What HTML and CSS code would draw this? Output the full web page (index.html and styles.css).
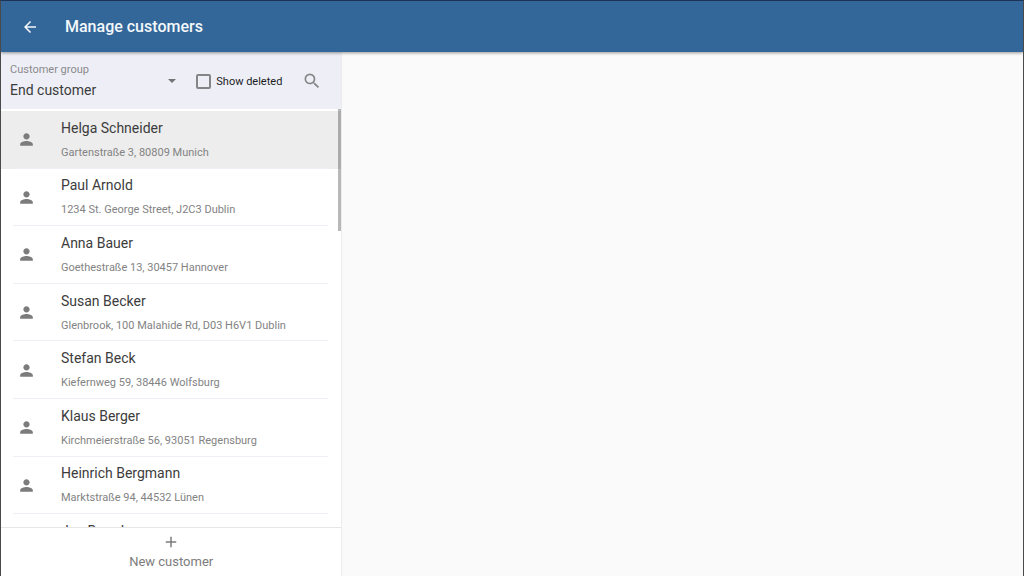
FILE: index.html
```html
<!DOCTYPE html>
<html lang="en">
<head>
    <meta charset="UTF-8">
    <meta name="viewport" content="width=device-width, initial-scale=1.0">
    <title>Manage customers</title>
    <link rel="stylesheet" href="styles.css">
</head>
<body>
    <!-- Person icon shared by all rows -->
    <svg class="icon-defs" aria-hidden="true">
        <symbol id="person" viewBox="0 0 24 24">
            <path d="M12 12c2.200 0 4-1.800 4-4s-1.800-4-4-4-4 1.800-4 4 1.800 4 4 4zm0 2c-2.700 0-8 1.300-8 4v2h16v-2c0-2.700-5.300-4-8-4z"/>
        </symbol>
    </svg>

    <header class="app-bar">
        <button type="button" class="back" aria-label="Back">
            <svg viewBox="0 0 24 24"><path d="M20 11H7.830l5.590-5.590L12 4l-8 8 8 8 1.410-1.410L7.830 13H20v-2z"/></svg>
        </button>
        <h1>Manage customers</h1>
    </header>

    <div class="content">
        <section class="sidebar">
            <form class="filter">
                <div class="group">
                    <label for="group">Customer group</label>
                    <select id="group">
                        <option>End customer</option>
                    </select>
                </div>
                <label class="deleted" for="deleted">
                    <input type="checkbox" id="deleted">
                    Show deleted
                </label>
                <button type="button" class="search" aria-label="Search">
                    <svg viewBox="0 0 24 24"><path d="M15.500 14h-.79l-.28-.27A6.470 6.470 0 0 0 16 9.500 6.500 6.500 0 1 0 9.500 16c1.610 0 3.090-.59 4.230-1.570l.27.28v.79l5 4.990L20.490 19l-4.990-5zm-6 0C7.010 14 5 11.990 5 9.500S7.010 5 9.500 5 14 7.010 14 9.500 11.990 14 9.500 14z"/></svg>
                </button>
            </form>

            <div class="list-area">
                <ul class="customers">
                    <li class="customer selected">
                        <svg><use href="#person"/></svg>
                        <div><h2>Helga Schneider</h2><p>Gartenstraße 3, 80809 Munich</p></div>
                    </li>
                    <li class="customer">
                        <svg><use href="#person"/></svg>
                        <div><h2>Paul Arnold</h2><p>1234 St. George Street, J2C3 Dublin</p></div>
                    </li>
                    <li class="customer">
                        <svg><use href="#person"/></svg>
                        <div><h2>Anna Bauer</h2><p>Goethestraße 13, 30457 Hannover</p></div>
                    </li>
                    <li class="customer">
                        <svg><use href="#person"/></svg>
                        <div><h2>Susan Becker</h2><p>Glenbrook, 100 Malahide Rd, D03 H6V1 Dublin</p></div>
                    </li>
                    <li class="customer">
                        <svg><use href="#person"/></svg>
                        <div><h2>Stefan Beck</h2><p>Kiefernweg 59, 38446 Wolfsburg</p></div>
                    </li>
                    <li class="customer">
                        <svg><use href="#person"/></svg>
                        <div><h2>Klaus Berger</h2><p>Kirchmeierstraße 56, 93051 Regensburg</p></div>
                    </li>
                    <li class="customer">
                        <svg><use href="#person"/></svg>
                        <div><h2>Heinrich Bergmann</h2><p>Marktstraße 94, 44532 Lünen</p></div>
                    </li>
                    <li class="customer">
                        <svg><use href="#person"/></svg>
                        <div><h2>Jan Bernd</h2><p>&nbsp;</p></div>
                    </li>
                </ul>
                <div class="scroll-thumb"></div>
            </div>

            <button type="button" class="new-customer">
                <svg viewBox="0 0 24 24"><path d="M19 13h-6v6h-2v-6H5v-2h6V5h2v6h6v2z"/></svg>
                New customer
            </button>
        </section>
        <main class="detail"></main>
    </div>
</body>
</html>
```

FILE: styles.css
```css
* {
    box-sizing: border-box;
}

body {
    font-family: Roboto, "Liberation Sans", sans-serif;
    margin: 0;
    height: 100vh;
    display: flex;
    flex-direction: column;
    overflow: hidden;
    background-color: #fafafa;
    color: #3c3c3c;
    border: 1px solid #4a4a4c;
    border-top-color: #1d3257;
    border-bottom: none;
}

h1, h2, p, ul {
    margin: 0;
    padding: 0;
    font-weight: normal;
}

button {
    border: none;
    padding: 0;
    background: none;
    font-family: inherit;
    cursor: pointer;
}

svg {
    display: block;
    fill: currentColor;
}

.icon-defs {
    display: none;
}

/* Top bar */
.app-bar {
    display: flex;
    align-items: center;
    gap: 26px;
    flex: none;
    height: 51px;
    padding-left: 20px;
    background-color: #336799;
    color: #f4f8fb;
    box-shadow: 0 1px 3px rgba(0, 0, 0, 0.4);
    z-index: 1;
}

.back svg {
    width: 18px;
    height: 18px;
    color: #f4f8fb;
}

.app-bar h1 {
    font-size: 16px;
    font-weight: 500;
}

.content {
    display: flex;
    flex: 1;
    min-height: 0;
}

.sidebar {
    display: flex;
    flex-direction: column;
    width: 33.4%;
    background-color: white;
    border-right: 1px solid #ececec;
}

.detail {
    flex: 1;
}

/* Filter row above the list */
.filter {
    display: flex;
    align-items: center;
    flex: none;
    height: 57px;
    padding: 1px 19px 0 9px;
    background-color: #eeeff6;
}

.group {
    position: relative;
    flex: 1;
    margin-right: 20px;
}

.group label {
    display: block;
    font-size: 11px;
    line-height: 18px;
    color: #8a8a8d;
}

.group select {
    display: block;
    width: 100%;
    height: 22px;
    padding: 0;
    border: none;
    appearance: none;
    background: none;
    font-family: inherit;
    font-size: 14px;
    color: #3c3c3c;
}

/* Drop-down arrow over the select */
.group::after {
    content: "";
    position: absolute;
    right: 0;
    top: 18px;
    border: 4px solid transparent;
    border-top-color: #737376;
    border-bottom: none;
    pointer-events: none;
}

.deleted {
    display: flex;
    align-items: center;
    gap: 5px;
    font-size: 11px;
    color: #1c1c1e;
}

.deleted input {
    appearance: none;
    width: 15px;
    height: 15px;
    margin: 0;
    border: 2px solid #858588;
    border-radius: 2px;
}

.deleted input:checked {
    background-color: #336799;
}

.search {
    margin-left: 20px;
    color: #858588;
}

.search svg {
    width: 20px;
    height: 20px;
}

/* Customer list */
.list-area {
    position: relative;
    flex: 1;
    min-height: 0;
    overflow: hidden;
    padding-top: 2px;
}

.customers {
    list-style: none;
}

.customer {
    display: flex;
    align-items: center;
    gap: 25px;
    height: 10vh;
    min-height: 54px;
    padding-left: 16px;
    background: linear-gradient(#efeff5, #efeff5) no-repeat 12px 100% / calc(100% - 25px) 1px;
}

.customer.selected {
    background-color: #ededed;
}

.customer svg {
    width: 19px;
    height: 19px;
    color: #7c7c7c;
}

.customer div {
    padding-top: 2px;
}

.customer h2 {
    font-size: 14px;
    line-height: 24px;
}

.customer p {
    font-size: 11px;
    line-height: 26px;
    color: #838383;
}

.scroll-thumb {
    position: absolute;
    top: 0;
    right: 0;
    width: 3px;
    height: 122px;
    background-color: rgba(0, 0, 0, 0.28);
}

.new-customer {
    display: flex;
    flex-direction: column;
    align-items: center;
    gap: 3px;
    flex: none;
    height: 49px;
    padding-top: 5px;
    border-top: 1px solid #e6e6e6;
    font-size: 13px;
    line-height: 16px;
    color: #7c7c7c;
}

.new-customer svg {
    width: 18px;
    height: 18px;
}
```
